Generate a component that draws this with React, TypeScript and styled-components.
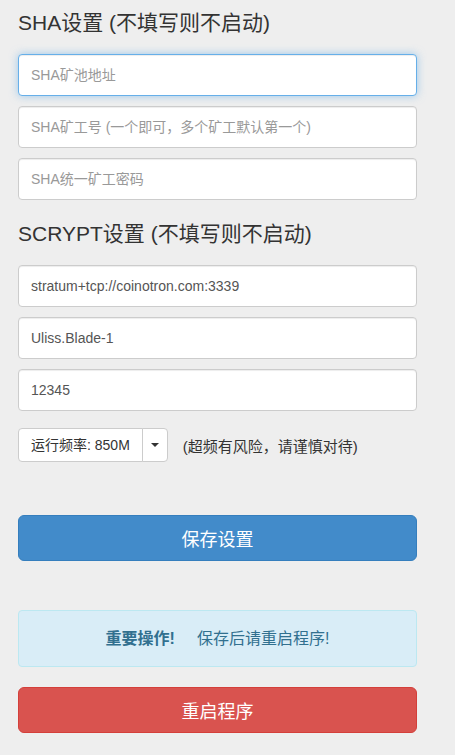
import styled, { createGlobalStyle, css } from "styled-components";

const GlobalStyle = createGlobalStyle`
  * {
    box-sizing: border-box;
  }
  body {
    margin: 0;
    background-color: #eeeeee;
    font-family: "Liberation Sans", "Noto Sans CJK SC", sans-serif;
    color: #333;
  }
`;

const Page = styled.main`
  width: 435px;
  padding: 11px 18px 20px;
`;

const Heading = styled.h3<{ $first?: boolean }>`
  margin: ${(p) => (p.$first ? "0" : "22px")} 0 20px;
  font-size: 21px;
  font-weight: normal;
  line-height: 23px;
  color: #333;
`;

const FieldStack = styled.div`
  display: flex;
  flex-direction: column;
  gap: 10px;
`;

const TextInput = styled.input<{ $focused?: boolean }>`
  display: block;
  width: 100%;
  height: 42px;
  padding: 0 12px;
  font-family: inherit;
  font-size: 14px;
  color: #555;
  background: #fff;
  border: 1px solid #ccc;
  border-radius: 4px;
  box-shadow: inset 0 1px 1px rgba(0, 0, 0, 0.075);
  outline: none;

  &::placeholder {
    color: #999;
  }

  ${(p) =>
    p.$focused &&
    css`
      border-color: #66afe9;
      box-shadow: inset 0 1px 1px rgba(0, 0, 0, 0.075),
        0 0 8px rgba(102, 175, 233, 0.6);
    `}
`;

const FreqRow = styled.div`
  display: flex;
  align-items: center;
  gap: 15px;
  margin-top: 17px;
`;

const ButtonGroup = styled.div`
  display: flex;
`;

const SelectButton = styled.button<{ $caret?: boolean }>`
  height: 34px;
  padding: ${(p) => (p.$caret ? "0 8px" : "0 12px")};
  margin-left: ${(p) => (p.$caret ? "-1px" : "0")};
  font-family: inherit;
  font-size: 14px;
  line-height: 20px;
  color: #333;
  background: #fff;
  border: 1px solid #ccc;
  border-radius: ${(p) => (p.$caret ? "0 4px 4px 0" : "4px 0 0 4px")};
  display: flex;
  align-items: center;
`;

const Caret = styled.span`
  display: inline-block;
  width: 0;
  height: 0;
  border-top: 4px solid #333;
  border-left: 4px solid transparent;
  border-right: 4px solid transparent;
`;

const Note = styled.span`
  font-size: 15px;
  color: #333;
`;

const BigButton = styled.button<{ $tone: "primary" | "danger"; $gap: number }>`
  display: block;
  width: 100%;
  height: 46px;
  margin-top: ${(p) => p.$gap}px;
  font-family: inherit;
  font-size: 18px;
  color: #fff;
  border-radius: 6px;
  border: 1px solid ${(p) => (p.$tone === "primary" ? "#357ebd" : "#d43f3a")};
  background-color: ${(p) => (p.$tone === "primary" ? "#428bca" : "#d9534f")};
`;

const Alert = styled.div`
  margin-top: 49px;
  padding: 15px;
  font-size: 16px;
  line-height: 25px;
  text-align: center;
  color: #31708f;
  background-color: #d9edf7;
  border: 1px solid #bce8f1;
  border-radius: 4px;

  & > b {
    margin-right: 22px;
  }
`;

export default function App() {
  return (
    <>
      <GlobalStyle />
      <Page>
        <Heading $first>SHA设置 (不填写则不启动)</Heading>
        <FieldStack>
          <TextInput $focused autoFocus placeholder="SHA矿池地址" />
          <TextInput placeholder="SHA矿工号 (一个即可，多个矿工默认第一个)" />
          <TextInput placeholder="SHA统一矿工密码" />
        </FieldStack>

        <Heading>SCRYPT设置 (不填写则不启动)</Heading>
        <FieldStack>
          <TextInput defaultValue="stratum+tcp://coinotron.com:3339" />
          <TextInput defaultValue="Uliss.Blade-1" />
          <TextInput defaultValue="12345" />
        </FieldStack>

        <FreqRow>
          <ButtonGroup>
            <SelectButton>运行频率: 850M</SelectButton>
            <SelectButton $caret>
              <Caret />
            </SelectButton>
          </ButtonGroup>
          <Note>(超频有风险，请谨慎对待)</Note>
        </FreqRow>

        <BigButton $tone="primary" $gap={53}>保存设置</BigButton>

        <Alert>
          <b>重要操作!</b>保存后请重启程序!
        </Alert>

        <BigButton $tone="danger" $gap={20}>重启程序</BigButton>
      </Page>
    </>
  );
}
